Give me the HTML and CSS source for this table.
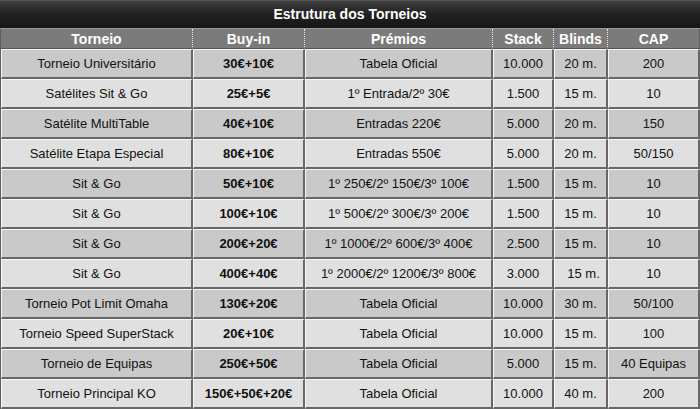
FILE: index.html
```html
<!DOCTYPE html>
<html lang="pt">
<head>
<meta charset="utf-8">
<title>Estrutura dos Torneios</title>
<link rel="stylesheet" href="styles.css">
</head>
<body>
<div class="panel">
  <div class="title">Estrutura dos Torneios</div>
  <table class="grid">
    <colgroup>
      <col class="c1"><col class="c2"><col class="c3"><col class="c4"><col class="c5"><col class="c6">
    </colgroup>
    <thead>
      <tr><th>Torneio</th><th>Buy-in</th><th>Prémios</th><th>Stack</th><th>Blinds</th><th class="last">CAP</th></tr>
    </thead>
    <tbody>
      <tr><td>Torneio Universitário</td><td class="b">30€+10€</td><td>Tabela Oficial</td><td>10.000</td><td>20 m.</td><td>200</td></tr>
      <tr><td>Satélites Sit &amp; Go</td><td class="b">25€+5€</td><td>1º Entrada/2º 30€</td><td>1.500</td><td>15 m.</td><td>10</td></tr>
      <tr><td>Satélite MultiTable</td><td class="b">40€+10€</td><td>Entradas 220€</td><td>5.000</td><td>20 m.</td><td>150</td></tr>
      <tr><td>Satélite Etapa Especial</td><td class="b">80€+10€</td><td>Entradas 550€</td><td>5.000</td><td>20 m.</td><td>50/150</td></tr>
      <tr><td>Sit &amp; Go</td><td class="b">50€+10€</td><td>1º 250€/2º 150€/3º 100€</td><td>1.500</td><td>15 m.</td><td>10</td></tr>
      <tr><td>Sit &amp; Go</td><td class="b">100€+10€</td><td>1º 500€/2º 300€/3º 200€</td><td>1.500</td><td>15 m.</td><td>10</td></tr>
      <tr><td>Sit &amp; Go</td><td class="b">200€+20€</td><td>1º 1000€/2º 600€/3º 400€</td><td>2.500</td><td>15 m.</td><td>10</td></tr>
      <tr><td>Sit &amp; Go</td><td class="b">400€+40€</td><td>1º 2000€/2º 1200€/3º 800€</td><td>3.000</td><td class="nudge">15 m.</td><td>10</td></tr>
      <tr><td>Torneio Pot Limit Omaha</td><td class="b">130€+20€</td><td>Tabela Oficial</td><td>10.000</td><td>30 m.</td><td>50/100</td></tr>
      <tr><td>Torneio Speed SuperStack</td><td class="b">20€+10€</td><td>Tabela Oficial</td><td>10.000</td><td>15 m.</td><td>100</td></tr>
      <tr><td>Torneio de Equipas</td><td class="b">250€+50€</td><td>Tabela Oficial</td><td>5.000</td><td>15 m.</td><td>40 Equipas</td></tr>
      <tr><td>Torneio Principal KO</td><td class="b">150€+50€+20€</td><td>Tabela Oficial</td><td>10.000</td><td>40 m.</td><td>200</td></tr>
    </tbody>
  </table>
</div>
</body>
</html>
```

FILE: styles.css
```css
html, body {
  margin: 0;
  padding: 0;
  background: #ffffff;
}

.panel {
  width: 700px;
  font-family: "Liberation Sans", Arial, sans-serif;
  color: #111;
}

.title {
  height: 29px;
  box-sizing: border-box;
  background: linear-gradient(#3e3e3e, #222 45%, #161616);
  border-top: 1px solid #555;
  border-bottom: 1px solid #9c9c9c;
  color: #fff;
  font-size: 14px;
  font-weight: bold;
  line-height: 27px;
  text-align: center;
}

.grid {
  width: 700px;
  table-layout: fixed;
  border-collapse: separate;
  border-spacing: 0;
  border-left: 1px solid #5e5e5e;
  box-sizing: border-box;
}

.c1 { width: 192px; }
.c2 { width: 112px; }
.c3 { width: 188px; }
.c4 { width: 61px; }
.c5 { width: 54px; }
.c6 { width: 92px; }

.grid th {
  height: 20px;
  box-sizing: border-box;
  padding: 0;
  background: #7b7b7b;
  color: #fff;
  font-size: 14px;
  font-weight: bold;
  text-align: center;
  border-right: 1px dotted #e6e6e6;
  border-bottom: 1px solid #555;
}

.grid th.last {
  border-right: 1px solid #5e5e5e;
}

.grid td {
  height: 30px;
  box-sizing: border-box;
  padding: 0 2px;
  font-size: 13px;
  text-align: center;
  white-space: nowrap;
  border-top: 1px solid #f6f6f6;
  border-left: 1px solid #f6f6f6;
  border-right: 2px solid #676767;
  border-bottom: 2px solid #676767;
  background: #e0e0e0;
}

.grid tbody tr:nth-child(odd) td {
  background: #c9c9c9;
}

.grid td.b {
  font-weight: bold;
}

.grid td.nudge {
  padding-left: 8px;
}
```
